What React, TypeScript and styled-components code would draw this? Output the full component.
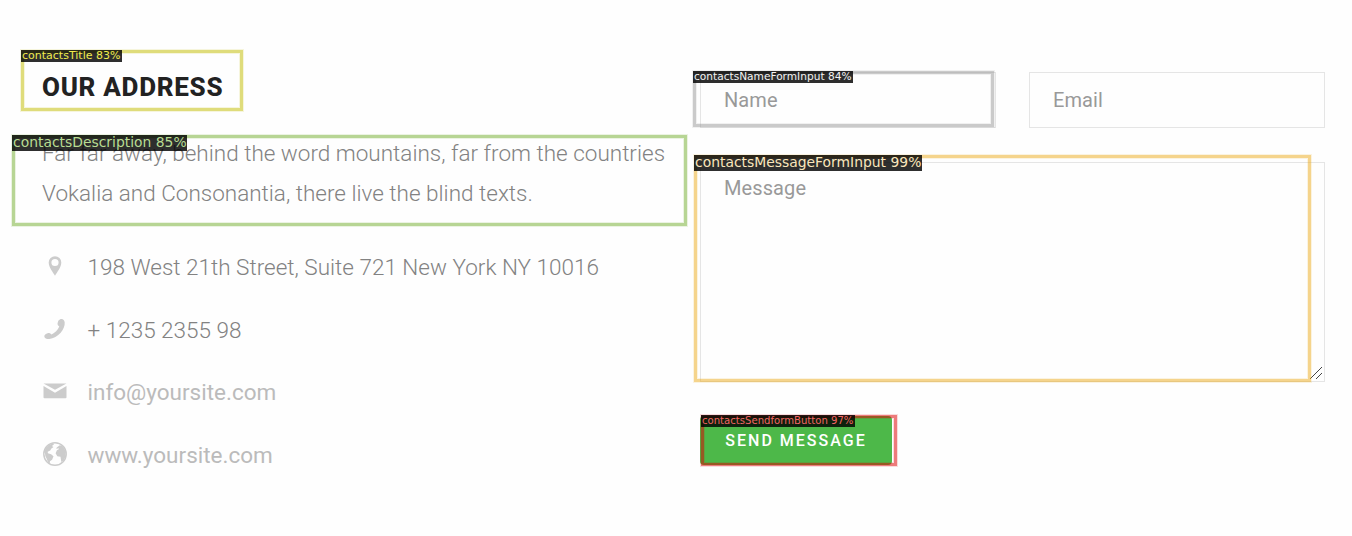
import React from "react";
import styled, { createGlobalStyle } from "styled-components";

const GlobalStyle = createGlobalStyle`
  * { box-sizing: border-box; }
  body { margin: 0; background: #fff; font-family: Roboto, sans-serif; overflow: hidden; }
`;

const Page = styled.main`
  position: relative;
  display: grid;
  grid-template-columns: 658px 625px;
  height: 536px;
  padding: 72px 27px 0 42px;
  background: #fefefe;
`;

const Address = styled.section`
  white-space: nowrap;
`;

const Title = styled.h3`
  margin: 0 0 31px;
  font-size: 26px;
  letter-spacing: 0.72px;
  line-height: 30px;
  font-weight: 800;
  color: #222;
`;

const Description = styled.p`
  margin: 0 0 34px;
  font-size: 22.5px;
  line-height: 40px;
  font-weight: 300;
  color: #828282;
`;

const ContactList = styled.ul`
  display: flex;
  flex-direction: column;
  gap: 22.6px;
  margin: 0;
  padding: 0;
  list-style: none;
`;

const ContactItem = styled.li<{ $link?: boolean }>`
  display: flex;
  align-items: center;
  gap: 19.5px;
  height: 40px;
  font-size: 22.5px;
  font-weight: ${(p) => (p.$link ? 400 : 300)};
  color: ${(p) => (p.$link ? "#bbb" : "#828282")};
`;

const Icon = styled.svg`
  flex: none;
  width: 26px;
  height: 26px;
  margin-top: 2px;
  fill: #ccc;
  overflow: visible;
`;

const Form = styled.form`
  display: flex;
  flex-direction: column;
  align-items: flex-start;
`;

const FieldRow = styled.div`
  display: flex;
  justify-content: space-between;
  width: 100%;
  margin-bottom: 34px;
`;

const Input = styled.input`
  width: 296px;
  height: 56px;
  padding: 0 23px;
  border: 1px solid #e5e5e5;
  background: transparent;
  font: 400 20px Roboto, sans-serif;
  letter-spacing: 0.1px;
  outline: none;
  &::placeholder { color: #999; opacity: 1; }
`;

const MessageBox = styled.div`
  position: relative;
  margin-bottom: 34px;
`;

const Message = styled.textarea`
  display: block;
  width: 625px;
  height: 220px;
  padding: 11px 23px;
  border: 1px solid #e5e5e5;
  background: transparent;
  font: 400 20px/28px Roboto, sans-serif;
  letter-spacing: 0.1px;
  outline: none;
  resize: none;
  &::placeholder { color: #999; opacity: 1; }
`;

const Grip = styled.svg`
  position: absolute;
  right: 3px;
  bottom: 3px;
  width: 12px;
  height: 12px;
  stroke: #444;
  stroke-width: 1;
`;

const SendButton = styled.button`
  width: 192px;
  height: 49px;
  padding: 0;
  border: 0;
  border-radius: 4px;
  background: #4db849;
  color: #fff;
  font: 500 16px Roboto, sans-serif;
  letter-spacing: 2px;
  text-transform: uppercase;
`;

type Rect = { $x: number; $y: number; $w: number; $h: number; $color: string };

const Region = styled.div<Rect>`
  position: absolute;
  left: ${(p) => p.$x}px;
  top: ${(p) => p.$y}px;
  width: ${(p) => p.$w}px;
  height: ${(p) => p.$h}px;
  border: 3px solid ${(p) => p.$color}84;
  box-shadow: 0 0 0 1px ${(p) => p.$color}22, inset 0 0 0 1px ${(p) => p.$color}22;
  pointer-events: none;
`;

const Tag = styled.span<{ $x: number; $y: number; $w: number; $h: number; $size: number; $color: string }>`
  position: absolute;
  left: ${(p) => p.$x}px;
  top: ${(p) => p.$y}px;
  width: ${(p) => p.$w}px;
  height: ${(p) => p.$h}px;
  padding-left: 1px;
  background: rgba(0, 0, 0, 0.82);
  color: ${(p) => p.$color};
  font: ${(p) => p.$size}px/${(p) => p.$h - 1}px "DejaVu Sans", sans-serif;
  white-space: nowrap;
  pointer-events: none;
`;

const detections = [
  { text: "contactsTitle 83%", box: [21, 50, 222, 61], line: "#c2bb00", tag: [21, 50, 101, 12], size: 11, ink: "#f0ec4c" },
  { text: "contactsDescription 85%", box: [12, 135, 675, 91], line: "#74ad30", tag: [12, 135, 175, 16], size: 13.9, ink: "#b8dc92" },
  { text: "contactsNameFormInput 84%", box: [693, 71, 301, 56], line: "#999999", tag: [693, 71, 160, 12], size: 10.6, ink: "#f2f2f2" },
  { text: "contactsMessageFormInput 99%", box: [694, 155, 617, 227], line: "#ebac20", tag: [694, 155, 228, 16], size: 13.9, ink: "#fae6bb" },
  { text: "contactsSendformButton 97%", box: [701, 415, 196, 51], line: "#dd0000", tag: [701, 415, 154, 12], size: 10.1, ink: "#f26464" },
];

export default function App() {
  return (
    <>
      <GlobalStyle />
      <Page>
        <Address>
          <Title>OUR ADDRESS</Title>
          <Description>
            Far far away, behind the word mountains, far from the countries
            <br />
            Vokalia and Consonantia, there live the blind texts.
          </Description>
          <ContactList>
            <ContactItem>
              <Icon viewBox="0 0 26 26">
                <path fillRule="evenodd" d="M13 1.2a6.3 6.3 0 0 0-6.3 6.3c0 4.9 4 9.1 6.3 13.3 2.3-4.2 6.3-8.4 6.3-13.3A6.3 6.3 0 0 0 13 1.2Zm0 2.7a3.6 3.6 0 1 1 0 7.2 3.6 3.6 0 0 1 0-7.2Z" />
              </Icon>
              198 West 21th Street, Suite 721 New York NY 10016
            </ContactItem>
            <ContactItem>
              <Icon viewBox="0 0 26 26">
                <path d="M16.5 2.6c1-1.2 2.4-1.8 3.5-1.5 1.6.4 2.5 1.8 2.7 3.5.3 3.2-1.3 7-4 10.1-2.9 3.4-7.4 5.8-11.3 6.3-1.8.2-3.7-.2-4.7-1.5-.7-1-.4-2.4.8-3.2 1.2-.7 2.5-1.5 3.7-1.3 1 .1 1.5 1 2.3 1.6 3.4-1.5 6.4-4.5 7.8-8-1.3-1-2.2-2.4-1.6-3.9.2-.8.5-1.5.8-2.1Z" />
              </Icon>
              + 1235 2355 98
            </ContactItem>
            <ContactItem $link>
              <Icon viewBox="0 0 26 26">
                <path d="M1.5 3.4h23L13 9.8ZM1.5 6.1 13 12.8l11.5-6.7v11.2a.9.9 0 0 1-.9.9H2.4a.9.9 0 0 1-.9-.9Z" />
              </Icon>
              info@yoursite.com
            </ContactItem>
            <ContactItem $link>
              <Icon viewBox="0 0 26 26">
                <circle cx="13" cy="11" r="11.2" fill="none" stroke="#ccc" strokeWidth="1.5" />
                <g transform="translate(0 -0.8)">
                  <path d="M4.5 4.7 7.8 2.3l3-.9 1.2 1-2.1 1.5 1.6 1-2.1 1.3-1.2 2-2.5 1.4.2 1.4 3.2 1.1 2.4 2-1.4 3.4-2.1 1.6-.4 2.7-1.2-.5-1.6-4.4-1.5-3-.3-2.6-1-2.1Z" />
                  <path d="m14.7 5.2 3.1-2.2 2.7.8 3.3 5-.1 5.7-2.3 4.1-2.1 1.1-.8-5.1-3.2-.5-1.7-3 1.3-3 2.2-1.2-.8-.8-1.9.8Z" />
                </g>
              </Icon>
              www.yoursite.com
            </ContactItem>
          </ContactList>
        </Address>
        <Form>
          <FieldRow>
            <Input placeholder="Name" />
            <Input placeholder="Email" />
          </FieldRow>
          <MessageBox>
            <Message placeholder="Message" />
            <Grip viewBox="0 0 12 12">
              <path d="M0 12L12 0M6 12l6-6" />
            </Grip>
          </MessageBox>
          <SendButton type="button">Send Message</SendButton>
        </Form>
        {detections.map((d) => (
          <React.Fragment key={d.text}>
            <Region $x={d.box[0]} $y={d.box[1]} $w={d.box[2]} $h={d.box[3]} $color={d.line} />
            <Tag $x={d.tag[0]} $y={d.tag[1]} $w={d.tag[2]} $h={d.tag[3]} $size={d.size} $color={d.ink}>
              {d.text}
            </Tag>
          </React.Fragment>
        ))}
      </Page>
    </>
  );
}
